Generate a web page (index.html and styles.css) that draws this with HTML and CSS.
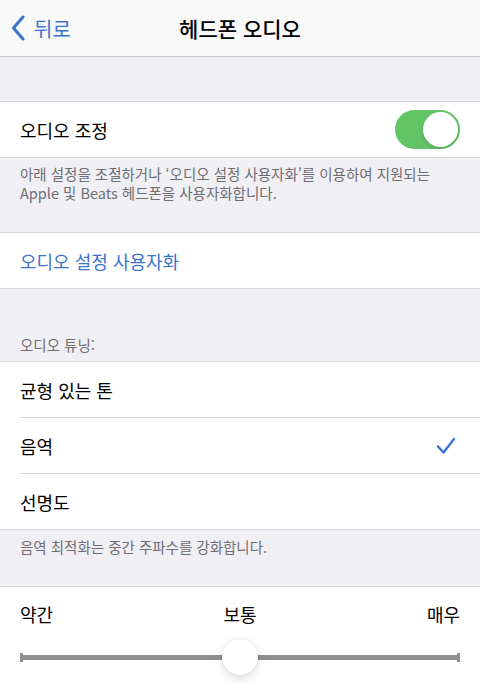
FILE: index.html
```html
<!DOCTYPE html>
<html lang="ko">
<head>
  <meta charset="UTF-8" />
  <meta name="viewport" content="width=device-width, initial-scale=1.0"/>
  <title>헤드폰 오디오</title>
  <link rel="stylesheet" href="styles.css">
</head>
<body>

  <nav class="navbar">
    <a class="back" href="#">
      <svg class="chevron" width="14" height="26" viewBox="0 0 14 26">
        <path d="M12 2 L2.5 13 L12 24" fill="none" stroke="#3b74cc" stroke-width="3" stroke-linecap="round" stroke-linejoin="round"/>
      </svg>
      <span>뒤로</span>
    </a>
    <h1 class="title">헤드폰 오디오</h1>
    <div></div>
  </nav>

  <div class="gap"></div>

  <!-- Audio adjust -->
  <div class="group">
    <div class="row">
      <span>오디오 조정</span>
      <span class="toggle on"><span class="knob"></span></span>
    </div>
  </div>
  <p class="footnote">아래 설정을 조절하거나 ‘오디오 설정 사용자화’를 이용하여 지원되는<br>Apple 및 Beats 헤드폰을 사용자화합니다.</p>

  <div class="group">
    <div class="row link">오디오 설정 사용자화</div>
  </div>

  <!-- Tuning -->
  <p class="header">오디오 튜닝:</p>
  <div class="group">
    <div class="row sep">균형 있는 톤</div>
    <div class="row sep">
      <span>음역</span>
      <svg class="check" width="20" height="18" viewBox="0 0 20 18">
        <path d="M2 9.5 L7.5 15.5 L18 2" fill="none" stroke="#3b74cc" stroke-width="2.4" stroke-linecap="round" stroke-linejoin="round"/>
      </svg>
    </div>
    <div class="row">선명도</div>
  </div>
  <p class="footnote short">음역 최적화는 중간 주파수를 강화합니다.</p>

  <!-- Strength -->
  <div class="group slider-box">
    <div class="labels">
      <span>약간</span>
      <span>보통</span>
      <span>매우</span>
    </div>
    <div class="slider">
      <span class="cap"></span>
      <span class="track"></span>
      <span class="cap"></span>
      <span class="thumb"></span>
    </div>
  </div>

</body>
</html>
```

FILE: styles.css
```css
body {
  margin: 0;
  background: #f0eff4;
  font-family: "Noto Sans CJK KR", "Noto Sans", sans-serif;
  color: #000;
}
.navbar {
  height: 56px;
  background: #f8f8f9;
  border-bottom: 1px solid #c9c9cd;
  display: grid;
  grid-template-columns: 1fr auto 1fr;
  align-items: center;
}
.back {
  display: flex;
  align-items: center;
  gap: 9px;
  padding-left: 11px;
  color: #3b74cc;
  text-decoration: none;
  font-size: 20px;
}
.title {
  margin: 0;
  font-size: 21px;
  font-weight: 500;
}
.gap {
  height: 44px;
}
.group {
  background: #fff;
  border-top: 1px solid #d6d5da;
  border-bottom: 1px solid #d6d5da;
}
.row {
  height: 55px;
  margin-left: 20px;
  padding-right: 20px;
  display: flex;
  align-items: center;
  justify-content: space-between;
  font-size: 18px;
}
.row.sep {
  border-bottom: 1px solid #d6d5da;
}
.row.link {
  color: #3b74cc;
}
.toggle {
  width: 65px;
  height: 39px;
  border-radius: 20px;
  background: #63c466;
  position: relative;
}
.knob {
  position: absolute;
  top: 2px;
  right: 2px;
  width: 35px;
  height: 35px;
  border-radius: 50%;
  background: #fff;
  box-shadow: 0 2px 4px rgba(0, 0, 0, 0.15);
}
.check {
  margin-right: 4px;
}
.footnote {
  margin: 0;
  padding: 6px 20px 30px;
  font-size: 14.5px;
  line-height: 19px;
  color: #6d6d72;
}
.footnote.short {
  padding-top: 7px;
}
.header {
  margin: 0;
  padding: 46px 20px 7px;
  font-size: 14.5px;
  line-height: 19px;
  color: #6d6d72;
}
.slider-box {
  border-bottom: none;
  padding: 12px 20px 30px;
}
.labels {
  display: flex;
  justify-content: space-between;
  font-size: 18px;
  line-height: 30px;
}
.slider {
  position: relative;
  height: 36px;
  margin-top: 10px;
  display: flex;
  align-items: center;
}
.track {
  flex: 1;
  height: 5px;
  background: #8f8f8f;
}
.cap {
  width: 3px;
  height: 9px;
  background: #8f8f8f;
}
.thumb {
  position: absolute;
  left: 50%;
  top: 0;
  margin-left: -18px;
  width: 36px;
  height: 36px;
  border-radius: 50%;
  background: #fff;
  box-shadow: 0 3px 8px rgba(0, 0, 0, 0.15), 0 0 1px rgba(0, 0, 0, 0.12);
}
```
